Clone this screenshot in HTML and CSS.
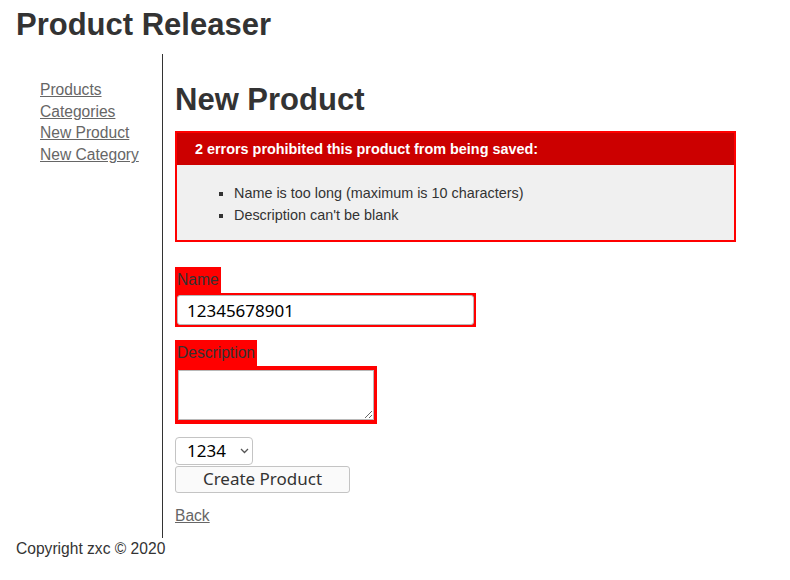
FILE: index.html
```html
<!DOCTYPE html>
<html>
<head>
<meta charset="utf-8">
<title>Product Releaser</title>
<link rel="stylesheet" href="styles.css">
</head>
<body>
<h1 class="site-title">Product Releaser</h1>
<div class="layout">
  <nav class="sidebar">
    <a href="#">Products</a>
    <a href="#">Categories</a>
    <a href="#">New Product</a>
    <a href="#">New Category</a>
  </nav>
  <main class="content">
    <h2 class="page-title">New Product</h2>
    <div class="error-explanation">
      <h3 class="error-head">2 errors prohibited this product from being saved:</h3>
      <ul class="error-list">
        <li>Name is too long (maximum is 10 characters)</li>
        <li>Description can't be blank</li>
      </ul>
    </div>
    <form class="product-form">
      <div class="field-error"><label for="name">Name</label></div>
      <div class="field-error input-wrap"><input id="name" class="text-input" type="text" value="12345678901"></div>
      <div class="field-error label-gap"><label for="desc">Description</label></div>
      <div class="field-error area-wrap"><textarea id="desc" class="text-area"></textarea></div>
      <div class="select-wrap">
        <select class="select"><option>1234</option></select>
        <svg class="chevron" width="9" height="6" viewBox="0 0 9 6"><path d="M1 1 L4.5 4.5 L8 1" fill="none" stroke="#555" stroke-width="1.3"/></svg>
      </div>
      <button type="button" class="submit">Create Product</button>
    </form>
    <a href="#" class="back">Back</a>
  </main>
</div>
<footer class="footer">Copyright zxc © 2020</footer>
</body>
</html>
```

FILE: styles.css
```css
html, body {
  margin: 0;
  padding: 0;
  background: #fff;
}
body {
  padding: 0 16px;
  font-family: "Liberation Sans", Arial, sans-serif;
  font-size: 15.6px;
  line-height: 21.7px;
  color: #333;
}
a {
  color: #666;
}
.site-title {
  font-size: 31px;
  line-height: 36px;
  font-weight: bold;
  margin: 7px 0 11px;
}
.layout {
  display: flex;
  align-items: stretch;
}
.sidebar {
  width: 122px;
  flex: none;
  padding: 25px 0 0 24px;
  border-right: 1px solid #333;
  display: flex;
  flex-direction: column;
  align-items: flex-start;
}
.content {
  padding: 0 0 11px 12px;
  flex: 1;
}
.page-title {
  font-size: 31px;
  line-height: 36px;
  font-weight: bold;
  margin: 28px 0 13px;
}
.error-explanation {
  width: 557px;
  border: 2px solid #f00;
  background: #f0f0f0;
  margin-bottom: 25px;
}
.error-head {
  margin: 0;
  height: 32px;
  line-height: 32px;
  padding-left: 18px;
  background: #c00;
  color: #fff;
  font-size: 14.4px;
  font-weight: bold;
}
.error-list {
  margin: 0;
  padding: 18px 0 14px 57px;
  list-style: square;
  font-size: 14.4px;
}
.product-form {
  display: flex;
  flex-direction: column;
  align-items: flex-start;
}
.field-error {
  background: #f00;
  padding: 2px;
}
.label-gap {
  margin-top: 13px;
}
.input-wrap {
  padding: 2px;
}
.text-input {
  display: block;
  box-sizing: border-box;
  width: 297px;
  height: 30px;
  margin: 0;
  padding: 0 9px;
  border: 1px solid #b8b8b8;
  border-radius: 3px;
  font-family: "Noto Sans", sans-serif;
  font-size: 17px;
  color: #000;
  background: #fff;
}
.area-wrap {
  padding: 4px 3px;
}
.text-area {
  display: block;
  box-sizing: border-box;
  width: 196px;
  height: 50px;
  margin: 0;
  border: 1px solid #b8b8b8;
  border-radius: 0;
  background: #fff;
}
.select-wrap {
  position: relative;
  margin-top: 13px;
}
.select {
  display: block;
  box-sizing: border-box;
  -webkit-appearance: none;
  appearance: none;
  width: 78px;
  height: 28px;
  margin: 0;
  padding: 0 0 0 11px;
  border: 1px solid #c4c4c4;
  border-radius: 4px;
  background: #fff;
  font-family: "Noto Sans", sans-serif;
  font-size: 17px;
  color: #000;
}
.chevron {
  position: absolute;
  right: 4px;
  top: 11px;
}
.submit {
  display: block;
  box-sizing: border-box;
  width: 175px;
  height: 27px;
  margin: 1px 0 0;
  padding: 0;
  border: 1px solid #c4c4c4;
  border-radius: 3px;
  background: #fafafa;
  font-family: "Noto Sans", sans-serif;
  font-size: 17px;
  line-height: 24px;
  color: #333;
}
.back {
  display: inline-block;
  margin-top: 12px;
}
.footer {
  margin: 0;
}
```
